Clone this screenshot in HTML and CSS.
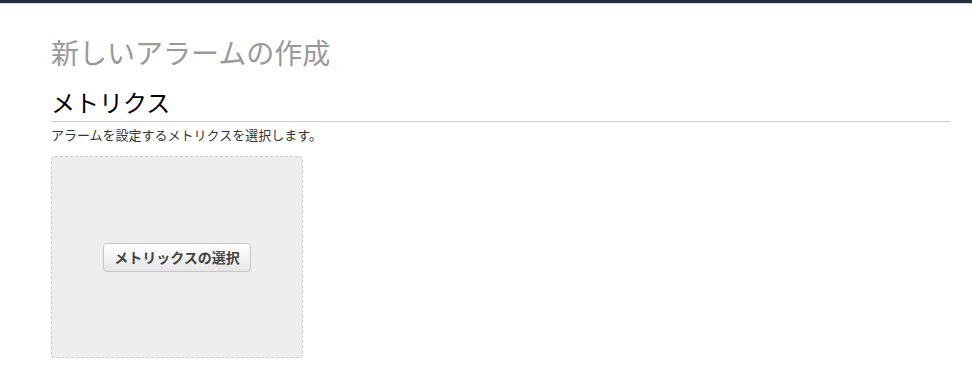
FILE: index.html
```html
<!DOCTYPE html>
<html lang="ja">
<head>
  <meta charset="UTF-8" />
  <title>新しいアラームの作成</title>
  <meta name="viewport" content="width=device-width, initial-scale=1.0" />
  <link rel="stylesheet" href="styles.css">
</head>
<body>
  <div class="topbar"></div>
  <div class="page">
    <h1 class="page-title">新しいアラームの作成</h1>
    <h2 class="section-title">メトリクス</h2>
    <p class="section-desc">アラームを設定するメトリクスを選択します。</p>
    <div class="metric-box">
      <button class="select-btn">メトリックスの選択</button>
    </div>
  </div>
</body>
</html>
```

FILE: styles.css
```css
body {
  margin: 0;
  font-family: "Noto Sans CJK JP", "Noto Sans", sans-serif;
  background: #fff;
  color: #333;
}

.topbar {
  height: 3px;
  background: #232f3e;
  border-bottom: 1px solid #d5dbdb;
}

.page {
  padding: 31px 21px 0 51px;
}

.page-title {
  margin: 0;
  font-size: 28px;
  line-height: 34px;
  font-weight: normal;
  color: #999;
}

.section-title {
  margin: 18px 0 0;
  padding-bottom: 4px;
  font-size: 24px;
  line-height: 30px;
  font-weight: normal;
  color: #000;
  border-bottom: 1px solid #ccc;
}

.section-desc {
  margin: 4px 0 0;
  font-size: 13px;
  line-height: 18px;
  color: #333;
}

.metric-box {
  margin-top: 12px;
  width: 250px;
  height: 200px;
  background: #eee;
  border: 1px dashed #ccc;
  border-radius: 4px;
  display: flex;
  align-items: center;
  justify-content: center;
}

.select-btn {
  padding: 0 10px;
  height: 29px;
  font-family: inherit;
  font-size: 14px;
  font-weight: bold;
  color: #444;
  background: linear-gradient(#fff, #e6e6e6);
  border: 1px solid #c6c6c6;
  border-radius: 4px;
  cursor: pointer;
}
```
